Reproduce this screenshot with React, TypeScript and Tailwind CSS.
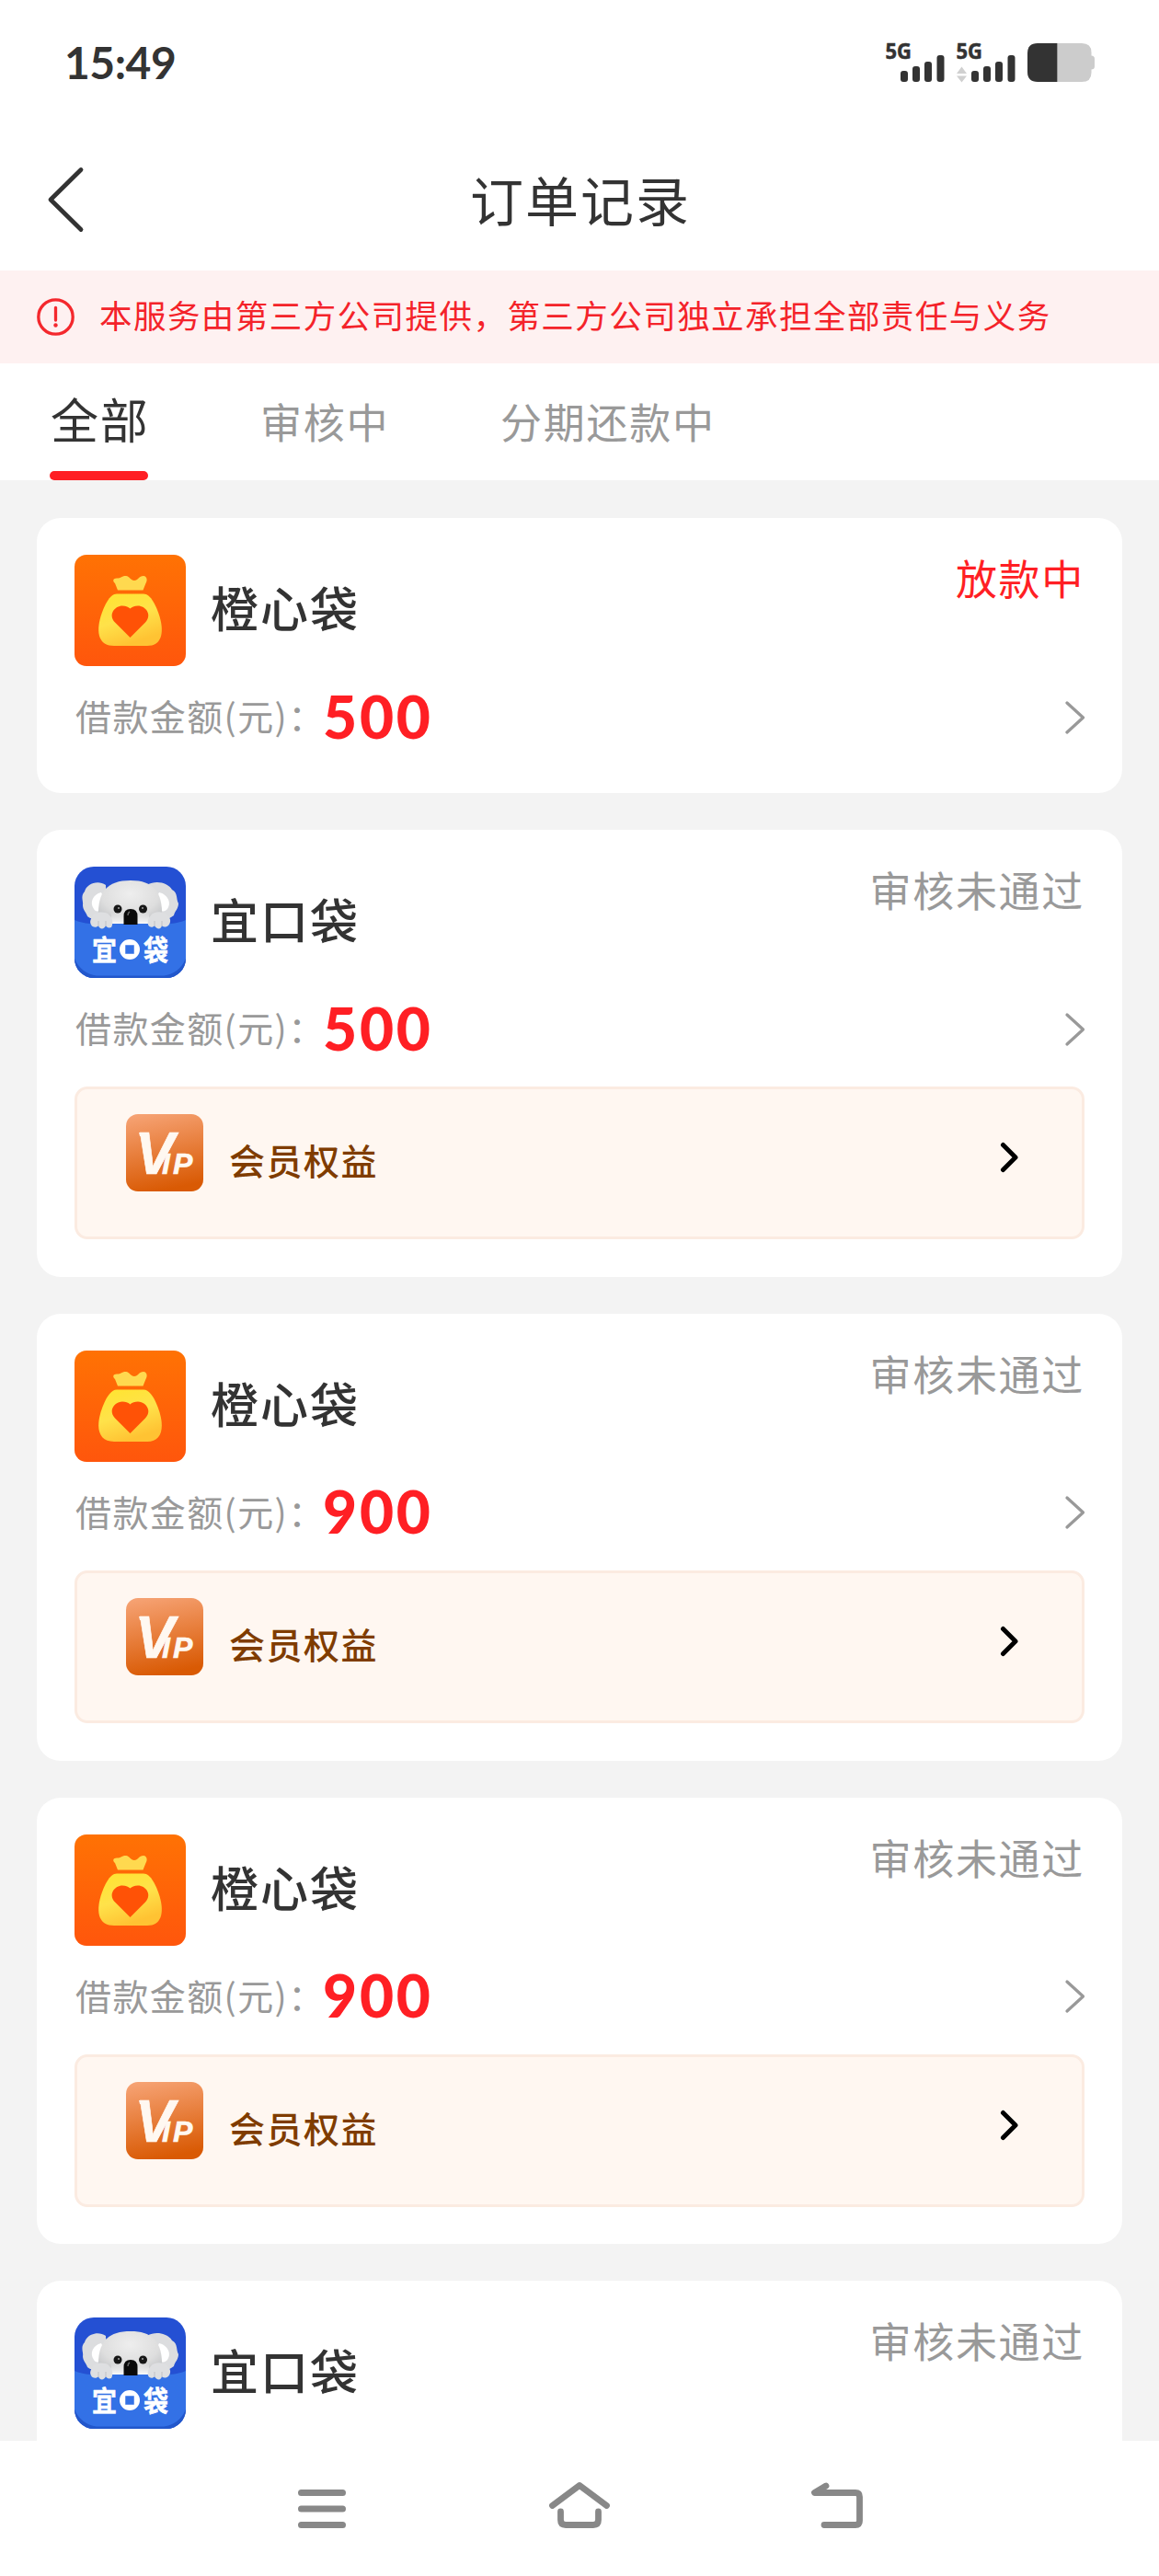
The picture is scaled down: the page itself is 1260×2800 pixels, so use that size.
import React from "react";

type Order = {
  brand: "orange" | "koala";
  name: string;
  status: string;
  active?: boolean;
  amount?: number;
  vip?: boolean;
};

const orders: Order[] = [
  { brand: "orange", name: "橙心袋", status: "放款中", active: true, amount: 500 },
  { brand: "koala", name: "宜口袋", status: "审核未通过", amount: 500, vip: true },
  { brand: "orange", name: "橙心袋", status: "审核未通过", amount: 900, vip: true },
  { brand: "orange", name: "橙心袋", status: "审核未通过", amount: 900, vip: true },
  { brand: "koala", name: "宜口袋", status: "审核未通过" },
];

function Signal({ arrows = false }: { arrows?: boolean }) {
  return (
    <svg width="66" height="44" viewBox="0 0 66 44" className="shrink-0 overflow-visible">
      <text x="-0.5" y="18" fontSize="23" fontWeight="700" fill="#333" stroke="#333" strokeWidth="0.5" textLength="28.500" lengthAdjust="spacingAndGlyphs" fontFamily="Noto Sans, sans-serif">
        5G
      </text>
      {arrows && <path d="M0 34L5.500 26.500L11 34ZM0 36.500L5.500 43.500L11 36.500Z" fill="#d0d0d0" />}
      <g fill="#333">
        <rect x="16" y="31" width="8" height="12" rx="3" />
        <rect x="29" y="26" width="8" height="17" rx="3" />
        <rect x="42" y="21" width="8" height="22" rx="3" />
        <rect x="55.500" y="14" width="8" height="29" rx="3" />
      </g>
    </svg>
  );
}

function StatusBar() {
  return (
    <div className="flex h-[138px] items-start justify-between pr-[69px] pl-[70px] text-[#333]">
      <div className="mt-[38px] font-['Lato',sans-serif] text-[48px] leading-[60px] font-bold tracking-[-0.500px]">15:49</div>
      <div className="mt-[46px] flex">
        <div className="mr-[11px] flex"><Signal /></div>
        <div className="mr-[10px] flex"><Signal arrows /></div>
        <svg width="75" height="44" viewBox="0 0 75 44">
          <path d="M34 1H60Q70.500 1 70.500 11V14.500Q74 14.500 74 18V26Q74 29.500 70.500 29.500V33Q70.500 43 60 43H34Z" fill="#ccc" />
          <path d="M33.500 1H12Q1 1 1 12V32Q1 43 12 43H33.500Z" fill="#333" />
        </svg>
      </div>
    </div>
  );
}

function OrangeLogo() {
  return (
    <svg width="121" height="121" viewBox="0 0 121 121">
      <defs>
        <linearGradient id="orangeBg" x1="0" y1="0" x2="0" y2="1">
          <stop offset="0" stopColor="#ff7204" />
          <stop offset="1" stopColor="#ff560c" />
        </linearGradient>
        <linearGradient id="bag" x1="0" y1="0" x2="0.4" y2="1">
          <stop offset="0" stopColor="#ffe42f" />
          <stop offset="0.55" stopColor="#ffe24a" />
          <stop offset="1" stopColor="#ffc333" />
        </linearGradient>
      </defs>
      <rect width="121" height="121" rx="13" fill="url(#orangeBg)" />
      <path d="M47 38.500L44 31C41 28.500 42 25.500 46 25.500C51 25.500 52 22.500 56 23C60 23.500 61 28 65 28C69 28 70 23 75 23C79 23.500 79.500 28 77.500 31L74.500 38.500Z" fill="#ffd94f" />
      <path d="M46 42.500H75C83 42.500 89 56 92.500 67C98 86 94 99 79 99H43C27 99 23 86 28.500 67C32 56 38 42.500 46 42.500Z" fill="url(#bag)" />
      <path d="M60.500 90L44 73.500C36 65 44 55.500 52 55.500C56 55.500 59 57 60.500 58.500C62 57 65 55.500 69 55.500C77 55.500 85 65 77 73.500Z" fill="#ff5206" />
    </svg>
  );
}

function KoalaLogo() {
  return (
    <svg width="121" height="121" viewBox="0 0 121 121">
      <defs>
        <clipPath id="koalaClip">
          <rect width="121" height="121" rx="21" />
        </clipPath>
        <radialGradient id="fur" cx="0.5" cy="0.3" r="0.75">
          <stop offset="0" stopColor="#eeeeee" />
          <stop offset="0.6" stopColor="#dedede" />
          <stop offset="1" stopColor="#bdbfc2" />
        </radialGradient>
        <linearGradient id="muzzle" x1="0" y1="0" x2="0" y2="1">
          <stop offset="0" stopColor="#fff" stopOpacity="0" />
          <stop offset="1" stopColor="#fff" />
        </linearGradient>
      </defs>
      <g clipPath="url(#koalaClip)">
        <rect width="121" height="121" fill="#2450d3" />
        <path d="M34 20C25 14 13 19 11 27C6 32 10 38 9 42C9 47 13 50 14 54C20 59 30 58 35 53ZM79 20C89 14 102 18 106 25C113 29 110 35 113 40C113 46 109 48 108 53C101 59 92 58 87 53Z" fill="#dcdddf" />
        <path d="M29 28C20 30 16 39 21 46C23 50 28 49 30 44C32 38 32 33 29 28ZM92 28C101 30 106 39 101 46C98 50 93 49 91 44C89 38 89 33 92 28Z" fill="#fff" />
        <path d="M26 54C25 28 35 15 61 15C86 15 96 28 95 54L91 63H31Z" fill="url(#fur)" />
        <path d="M40 50H81V63H40Z" fill="url(#muzzle)" />
        <path d="M0 58Q7 61 17 62H104Q114 61 121 58V121H0Z" fill="#2257cb" />
        <path d="M0 58Q7 61 17 62H104Q114 61 121 58V100Q114 116 97 118.500H24Q7 116 0 100Z" fill="#3371e6" />
        <path d="M20 53C22 49 35 48 38 53C42 56 42 63 40 66C37 67 35 66 34 64C32 69 27 68 26 64C24 67 19 66 18 63C16 60 18 56 20 53ZM83 53C86 48 98 48 101 53C105 56 105 61 102 64C99 66 97 66 95 64C94 69 89 68 87 64C85 67 81 66 80 63C79 59 80 56 83 53Z" fill="#dedfe1" />
        <path d="M26 59V65M34 59V65M87 59V65M95 59V65" stroke="#c5c7ca" strokeWidth="1.200" />
        <circle cx="47" cy="46" r="4.500" fill="#171717" />
        <circle cx="74.500" cy="46" r="4.500" fill="#171717" />
        <circle cx="48" cy="45" r="1.100" fill="#999" />
        <circle cx="74" cy="45" r="1.100" fill="#999" />
        <path d="M53.500 63V54Q53.500 46 61 46Q68.500 46 68.500 54V63Z" fill="#0a0a0a" />
        <path d="M58 53Q58 50 60 49" stroke="#666" strokeWidth="1.500" fill="none" />
        <text transform="translate(0 101.500) scale(1 1.12)" fontFamily="Noto Sans CJK SC, sans-serif" fontSize="27" fontWeight="700" fill="#fff" stroke="#fff" strokeWidth="0.500">
          <tspan x="19">宜</tspan>
          <tspan x="75">袋</tspan>
        </text>
        <circle cx="60" cy="90" r="9" fill="none" stroke="#fff" strokeWidth="4" />
        <rect x="54" y="84" width="12" height="12" fill="#3371e6" stroke="#fff" strokeWidth="2.500" />
      </g>
    </svg>
  );
}

function VipIcon() {
  return (
    <svg width="84" height="84" viewBox="0 0 84 84">
      <defs>
        <linearGradient id="vip" x1="0.2" y1="0" x2="0.4" y2="1">
          <stop offset="0" stopColor="#f6a273" />
          <stop offset="1" stopColor="#d95a04" />
        </linearGradient>
      </defs>
      <rect width="84" height="84" rx="13" fill="url(#vip)" />
      <text y="64.500" fill="#fff8f1" stroke="#fff8f1" strokeWidth="0.600" fontFamily="Liberation Sans, sans-serif" fontWeight="700" fontStyle="italic">
        <tspan x="10" fontSize="64">V</tspan>
        <tspan x="39" fontSize="32">I</tspan>
        <tspan x="51" fontSize="32">P</tspan>
      </text>
      <path d="M14 20H24V24H15Z" fill="#fff8f1" />
    </svg>
  );
}

function VipPanel() {
  return (
    <div className="mt-[20px] flex h-[166px] items-start rounded-[14px] border-[3px] border-[#fbebe1] bg-[#fff7f1] pt-[27px] pr-[68px] pl-[53px]">
      <VipIcon />
      <span className="mt-[19px] ml-[28px] text-[39px] leading-[60px] font-medium tracking-[1.5px] text-[#7f3c00]">会员权益</span>
      <svg width="21" height="34" viewBox="0 0 21 34" className="mt-[30px] ml-auto" fill="none" stroke="#000" strokeWidth="5" strokeLinecap="round" strokeLinejoin="round">
        <path d="M3.500 3.500L17 17L3.500 30.500" />
      </svg>
    </div>
  );
}

function OrderCard({ order }: { order: Order }) {
  return (
    <article className={`shrink-0 rounded-[26px] bg-white px-[41px] pt-[40px] ${order.vip ? "h-[485.800px]" : "h-[299px]"}`}>
      <div className="flex items-start">
        {order.brand === "orange" ? <OrangeLogo /> : <KoalaLogo />}
        <h2 className="mt-[17px] ml-[27px] text-[52px] leading-[80px] font-medium tracking-[2px] text-[#333]">{order.name}</h2>
        <span className={`-mt-[5px] ml-auto text-[45px] leading-[60px] tracking-[1.700px] ${order.active ? "text-[#ff1f24]" : "text-[#999]"}`}>
          {order.status}
        </span>
      </div>
      {order.amount !== undefined && (
        <div className="mt-[8px] flex h-[90px] items-center">
          <span className="w-[270px] pl-[1px] text-[39px] leading-[60px] tracking-[1.400px] whitespace-nowrap text-[#999]">借款金额(元)：</span>
          <span className="mt-[3px] font-['Lato',sans-serif] text-[64px] leading-[80px] font-black tracking-[2.800px] text-[#ff1f24]">{order.amount}</span>
          <svg width="24" height="38" viewBox="0 0 24 38" className="mt-[5px] mr-[-1px] ml-auto" fill="none" stroke="#999" strokeWidth="3.300" strokeLinecap="round" strokeLinejoin="round">
            <path d="M4 3L21.500 19L4 35" />
          </svg>
        </div>
      )}
      {order.vip && <VipPanel />}
    </article>
  );
}

export default function App() {
  return (
    <div className="flex h-[2800px] w-[1260px] flex-col overflow-hidden bg-[#f3f3f3] font-['Noto_Sans_CJK_SC',sans-serif]">
      <header className="h-[294px] shrink-0 bg-white">
        <StatusBar />
        <div className="grid h-[156px] grid-cols-[200px_1fr_200px]">
          <svg width="42" height="78" viewBox="0 0 42 78" className="mt-[40px] ml-[50px]" fill="none" stroke="#333" strokeWidth="4.800" strokeLinecap="round" strokeLinejoin="round">
            <path d="M38 6.500L5 39L38 71.500" />
          </svg>
          <h1 className="mt-[36px] pl-[2px] text-center text-[58px] leading-[84px] tracking-[2px] text-[#333]">订单记录</h1>
        </div>
      </header>

      <div className="flex h-[101px] shrink-0 items-center bg-[#fef1f1] pl-[39px] text-[#f4232a]">
        <svg width="43" height="43" viewBox="0 0 43 43" className="-mt-[1px]" fill="none" stroke="#f4282d" strokeWidth="3.300">
          <circle cx="21.500" cy="21.500" r="18.700" />
          <path d="M21.500 11.500V25" strokeLinecap="round" />
          <circle cx="21.500" cy="30.500" r="2.200" fill="#f4282d" stroke="none" />
        </svg>
        <p className="-mt-[6px] ml-[26px] text-[35.500px] leading-[60px] tracking-[1.450px] whitespace-nowrap">本服务由第三方公司提供，第三方公司独立承担全部责任与义务</p>
      </div>

      <nav className="flex h-[127px] shrink-0 bg-white pl-[54px] text-[45px] leading-[70px] tracking-[1.700px] whitespace-nowrap text-[#999]">
        <div className="flex w-[107px] flex-col justify-between">
          <span className="mt-[25px] pl-[1px] text-[52px] text-[#333]">全部</span>
          <span className="h-[10px] rounded-full bg-[#ff1f24]" />
        </div>
        <span className="mt-[28px] ml-[122px]">审核中</span>
        <span className="mt-[28px] ml-[121px]">分期还款中</span>
      </nav>

      <main className="flex min-h-0 flex-1 flex-col gap-[40px] overflow-hidden px-[40px] pt-[41px]">
        {orders.map((order, i) => (
          <OrderCard key={i} order={order} />
        ))}
      </main>

      <footer className="flex h-[147px] shrink-0 items-start justify-center gap-[210px] bg-white pt-[40px]">
        <svg width="70" height="60" viewBox="0 0 70 60" fill="none" stroke="#888" strokeWidth="7" strokeLinecap="round">
          <path d="M12.500 16.500H57.500M12.500 34H57.500M12.500 51.500H57.500" />
        </svg>
        <svg width="70" height="60" viewBox="0 0 70 60" fill="none" stroke="#888" strokeWidth="6.800" strokeLinecap="round" strokeLinejoin="round">
          <path d="M5.500 30.500L35 8.500L64.500 30.500M14.500 37V46Q14.500 51.500 20 51.500H50Q55.500 51.500 55.500 46V37" />
        </svg>
        <svg width="70" height="60" viewBox="0 0 70 60" fill="none" stroke="#888" strokeWidth="6.800" strokeLinecap="round" strokeLinejoin="round">
          <path d="M23 9L10.500 16.500H55Q59.500 16.500 59.500 21V47Q59.500 51.500 55 51.500H21" />
        </svg>
      </footer>
    </div>
  );
}
